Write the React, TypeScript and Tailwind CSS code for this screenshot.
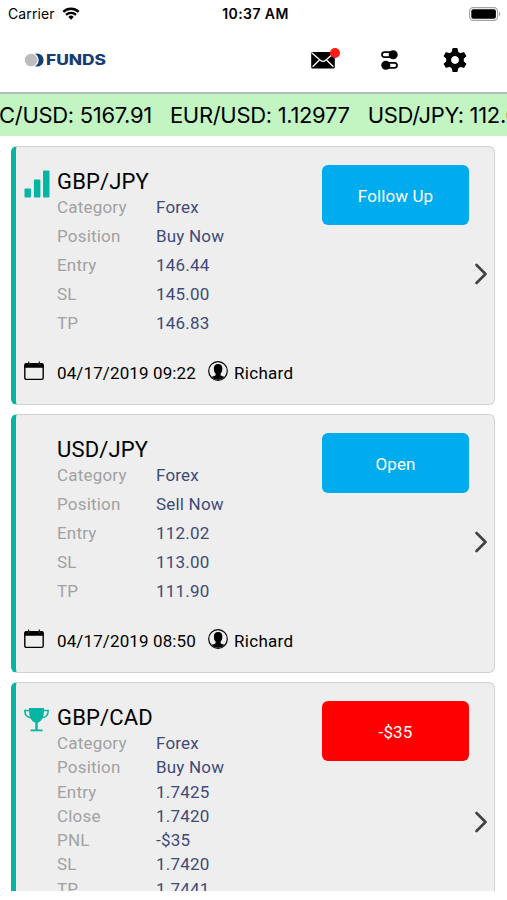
import type { ReactNode } from "react";

type Signal = {
  pair: string;
  icon?: ReactNode;
  fields: [string, string][];
  action: string;
  actionClass: string;
  rowClass: string;
  cardClass: string;
  date: string;
  author: string;
};

const tickers = [
  { pair: "BTC/USD", price: "5167.91" },
  { pair: "EUR/USD", price: "1.12977" },
  { pair: "USD/JPY", price: "112.02" },
];

const signals: Signal[] = [
  {
    pair: "GBP/JPY",
    icon: <BarsIcon />,
    fields: [
      ["Category", "Forex"],
      ["Position", "Buy Now"],
      ["Entry", "146.44"],
      ["SL", "145.00"],
      ["TP", "146.83"],
    ],
    action: "Follow Up",
    actionClass: "bg-[#00acee]",
    rowClass: "h-[29.1px]",
    cardClass: "h-[259px]",
    date: "04/17/2019 09:22",
    author: "Richard",
  },
  {
    pair: "USD/JPY",
    fields: [
      ["Category", "Forex"],
      ["Position", "Sell Now"],
      ["Entry", "112.02"],
      ["SL", "113.00"],
      ["TP", "111.90"],
    ],
    action: "Open",
    actionClass: "bg-[#00acee]",
    rowClass: "h-[29.1px]",
    cardClass: "h-[259px]",
    date: "04/17/2019 08:50",
    author: "Richard",
  },
  {
    pair: "GBP/CAD",
    icon: <TrophyIcon />,
    fields: [
      ["Category", "Forex"],
      ["Position", "Buy Now"],
      ["Entry", "1.7425"],
      ["Close", "1.7420"],
      ["PNL", "-$35"],
      ["SL", "1.7420"],
      ["TP", "1.7441"],
    ],
    action: "-$35",
    actionClass: "bg-[#ff0000]",
    rowClass: "h-[24.3px]",
    cardClass: "h-[283px]",
    date: "04/17/2019 08:12",
    author: "Richard",
  },
];

export default function App() {
  return (
    <div className="flex h-[900px] w-[507px] flex-col overflow-hidden bg-white font-['Roboto',sans-serif] text-black">
      <StatusBar />
      <Header />
      <Ticker />
      <main className="mt-[10px] flex h-[745px] flex-col gap-[9px] overflow-hidden pr-3 pl-[11px]">
        {signals.map((signal) => (
          <SignalCard key={signal.pair} signal={signal} />
        ))}
      </main>
    </div>
  );
}

function StatusBar() {
  return (
    <div className="grid h-[27px] grid-cols-3 items-center pr-1.5 pl-2 font-['Inter',sans-serif] text-[14px]">
      <div className="flex items-center gap-[7px] tracking-[0.1px]">
        Carrier
        <svg viewBox="0 0 18 13" className="h-[13px] w-[18px]" fill="none" stroke="black" strokeWidth="2.3">
          <path d="M1.3 4.9a11 11 0 0 1 15.4 0" />
          <path d="M4 7.9a7.1 7.1 0 0 1 10 0" />
          <path d="M6.3 9.9a3.8 3.8 0 0 1 5.4 0L9 12.7z" fill="black" stroke="none" />
        </svg>
      </div>
      <div className="pl-0.5 text-center font-semibold tracking-[0.4px] whitespace-nowrap">10:37 AM</div>
      <div className="flex justify-end">
        <svg viewBox="0 0 32 14" className="h-[14px] w-8">
          <rect x="0.6" y="0.6" width="28" height="12.8" rx="3.6" fill="none" stroke="#a3a3a3" strokeWidth="1.1" />
          <rect x="2.3" y="2.3" width="24.6" height="9.4" rx="2" />
          <path d="M30 4.8c1.6.5 1.6 3.9 0 4.4z" fill="#a3a3a3" />
        </svg>
      </div>
    </div>
  );
}

function Header() {
  return (
    <header className="flex h-[67px] items-center justify-between border-b-2 border-[#b3bfc3] pr-10 pl-6">
      <div className="flex items-center">
        <svg viewBox="0 0 22 14" className="h-[14px] w-[22px]">
          <circle cx="13" cy="7" r="6.6" fill="#173e73" />
          <circle cx="7.5" cy="7" r="7.2" fill="white" />
          <circle cx="7" cy="7" r="6.3" fill="#bdbdbd" />
        </svg>
        <span className="origin-left scale-x-[1.24] font-['Inter',sans-serif] text-[14px] leading-none font-extrabold text-[#173e73]">
          FUNDS
        </span>
      </div>
      <nav className="flex items-center">
        <button className="relative mr-[46px] h-6 w-6" aria-label="Messages">
          <MailIcon />
          <span className="absolute top-0 -right-[5px] h-[10px] w-[10px] rounded-full bg-[#fb1b12]" />
        </button>
        <button className="mr-[45px]" aria-label="Filters">
          <TogglesIcon />
        </button>
        <button aria-label="Settings">
          <GearIcon />
        </button>
      </nav>
    </header>
  );
}

function Ticker() {
  return (
    <div className="flex h-[42px] shrink-0 items-center overflow-hidden bg-[#c3f5c3] pt-px">
      <div className="-ml-[27px] flex gap-[18px] font-['Inter',sans-serif] text-[22px] tracking-[-0.32px] whitespace-nowrap">
        {tickers.map((t) => (
          <span key={t.pair}>
            {t.pair}: {t.price}
          </span>
        ))}
      </div>
    </div>
  );
}

function SignalCard({ signal }: { signal: Signal }) {
  return (
    <article
      className={`flex shrink-0 rounded-[6px] border border-l-[5px] border-[#d2d2d2] border-l-[#05b5a3] bg-[#eeeeee] ${signal.cardClass}`}
    >
      <div className="flex grow flex-col">
        <div className="flex">
          <div className="w-[41px] pt-[23px] pl-2">{signal.icon}</div>
          <div className="pt-[22px]">
            <h2 className="text-[22px] leading-[25px] tracking-[0.15px]">{signal.pair}</h2>
            <dl className="text-[17px] tracking-[0.2px]">
              {signal.fields.map(([label, value]) => (
                <div key={label} className={`flex ${signal.rowClass}`}>
                  <dt className="w-[99px] leading-[26px] text-[#a1a1a1]">{label}</dt>
                  <dd className="leading-[26px] text-[#3f4a78]">{value}</dd>
                </div>
              ))}
            </dl>
          </div>
        </div>
        <footer className="mt-auto flex h-[61px] items-center pl-2 text-[17px] tracking-[0.12px]">
          <CalendarIcon />
          <span className="ml-[13px] w-[151px]">{signal.date}</span>
          <UserIcon />
          <span className="ml-[6px] tracking-[0.3px]">{signal.author}</span>
        </footer>
      </div>
      <div className="flex w-[172px] shrink-0 flex-col">
        <button
          className={`mt-[18px] h-[60px] w-[147px] shrink-0 rounded-[6px] pt-[3px] text-[17px] tracking-[0.1px] text-white ${signal.actionClass}`}
        >
          {signal.action}
        </button>
      </div>
      <div className="-ml-[20px] flex w-5 shrink-0 items-center pb-1">
        <svg viewBox="0 0 14 22" className="h-[22px] w-[14px]" fill="none" stroke="#444" strokeWidth="2.7" strokeLinecap="round" strokeLinejoin="round">
          <path d="M2.5 2l9 9-9 9" />
        </svg>
      </div>
    </article>
  );
}

function MailIcon() {
  return (
    <svg viewBox="0 0 24 24" className="h-6 w-6">
      <rect x="0.2" y="4" width="23.6" height="16.5" rx="1.6" />
      <path d="M1 5l8.3 7.2c1.6 1.3 3.8 1.3 5.4 0L23 5M1.6 18.8l6.6-6.6M22.4 18.8l-6.6-6.6" fill="none" stroke="white" strokeWidth="1.3" />
    </svg>
  );
}

function TogglesIcon() {
  return (
    <svg viewBox="0 0 17 20" className="h-5 w-[17px]">
      <rect x="1" y="2.2" width="13" height="5" rx="2.5" fill="none" stroke="black" strokeWidth="1.8" />
      <circle cx="12.2" cy="4.7" r="4.5" />
      <rect x="3" y="12.8" width="13" height="5" rx="2.5" fill="none" stroke="black" strokeWidth="1.8" />
      <circle cx="4.8" cy="15.3" r="4.5" />
    </svg>
  );
}

function GearIcon() {
  return (
    <svg viewBox="-12 -12 24 24" className="h-6 w-6">
      <circle r="6.4" fill="none" stroke="black" strokeWidth="4.9" />
      {[0, 60, 120, 180, 240, 300].map((angle) => (
        <path key={angle} d="M-3.4-7.4l.9-4q.1-.5.6-.5h3.800q.5 0 .6.500l.9 4z" transform={`rotate(${angle})`} />
      ))}
    </svg>
  );
}

function BarsIcon() {
  return (
    <svg viewBox="0 0 26 28" className="h-7 w-[26px]" fill="#05b5a3">
      <rect x="0.5" y="18.5" width="6.5" height="9" rx="1" />
      <rect x="9.9" y="9.5" width="6.5" height="18" rx="1" />
      <rect x="19" y="0.5" width="6.5" height="27" rx="1" />
    </svg>
  );
}

function TrophyIcon() {
  return (
    <svg viewBox="0 0 26 28" className="h-7 w-[26px]" fill="#05b5a3">
      <path d="M5 2h15v2.500c0 6.500-2.400 11-6.300 12.200v6.800h4.800v1.700h-12v-1.700h4.800v-6.800C7.400 15.500 5 11 5 4.500z" />
      <path d="M5.500 4.600H.8c0 4.600 2.400 7 6.500 7.200M19.500 4.600h4.700c0 4.600-2.400 7-6.500 7.200" fill="none" stroke="#05b5a3" strokeWidth="1.500" />
    </svg>
  );
}

function CalendarIcon() {
  return (
    <svg viewBox="0 0 20 20" className="-mt-[5px] h-5 w-5">
      <rect x="0.8" y="3" width="18.4" height="15.4" rx="1.6" fill="none" stroke="black" strokeWidth="1.4" />
      <path d="M0.5 6.800V3.500q0-1.500 1.500-1.500h1.500v1.200q1.200 1.600 2.400 0V2h8.200v1.200q1.200 1.600 2.400 0V2H18q1.500 0 1.500 1.500v3.300z" />
      <path d="M4.700.6v2.600M15.300.6v2.600" stroke="black" strokeWidth="1.1" />
    </svg>
  );
}

function UserIcon() {
  return (
    <svg viewBox="0 0 20 20" className="-mt-[5px] h-5 w-5">
      <circle cx="10" cy="10" r="9.3" fill="none" stroke="black" strokeWidth="1.2" />
      <path d="M10.200 3c-3.200 0-4.500 1.900-4.300 4.900 0 2.100.6 3.700 1.700 4.600v1.700c-.9.800-2.800 1-4.400 1.600a9.300 9.300 0 0 0 13.600 0c-1.600-.6-3.300-.8-4.200-1.600v-1.700c1.100-.9 1.700-2.500 1.700-4.600.2-3-1-4.900-4.100-4.900z" />
    </svg>
  );
}
